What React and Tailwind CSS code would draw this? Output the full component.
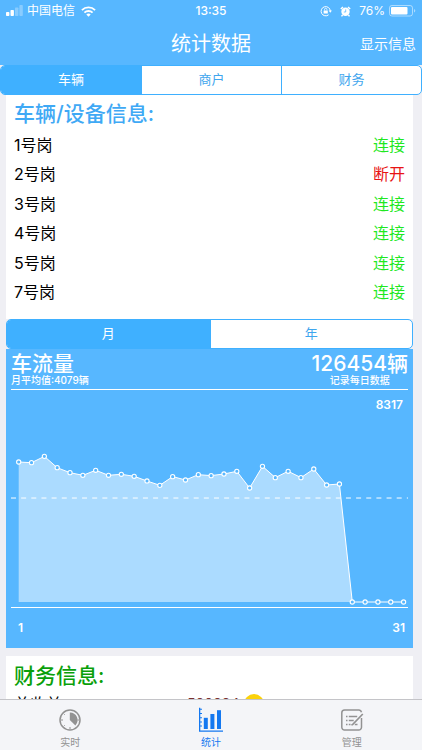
import React, { useState } from 'react';

const SECTIONS = ['车辆', '商户', '财务'];
const PERIODS = ['月', '年'];

const DEVICES = [
    { name: '1号岗', online: true },
    { name: '2号岗', online: false },
    { name: '3号岗', online: true },
    { name: '4号岗', online: true },
    { name: '5号岗', online: true },
    { name: '7号岗', online: true }
];

const DAILY = [
    5492, 5466, 5714, 5270, 5074, 4970, 5166, 4970, 5009, 4931, 4748, 4577, 4918, 4787, 4996, 4957,
    5022, 5127, 4473, 5323, 4879, 5127, 4879, 5218, 4591, 4630, 0, 0, 0, 0, 0
];
const AVERAGE = 4079;
const MAX = 8317;

function SignalIcon() {
    return (
        <svg width="17" height="12" viewBox="0 0 17 12" fill="white" aria-hidden="true">
            <rect x="0" y="7" width="3.4" height="4" rx="0.8" />
            <rect x="4.5" y="5" width="3.4" height="6" rx="0.8" />
            <rect x="9" y="2.5" width="3.4" height="8.5" rx="0.8" opacity="0.3" />
            <rect x="13.4" y="0" width="3.4" height="11" rx="0.8" opacity="0.3" />
        </svg>
    );
}

function WifiIcon() {
    return (
        <svg width="15" height="11" viewBox="0 0 15 11" fill="none" stroke="white" strokeWidth="1.8" aria-hidden="true">
            <path d="M0.9 4.1a9.4 9.4 0 0 1 13.2 0" />
            <path d="M3.4 6.7a5.8 5.8 0 0 1 8.2 0" />
            <path d="M7.5 10.8 5.3 8.6a3.1 3.1 0 0 1 4.4 0z" fill="white" stroke="none" />
        </svg>
    );
}

function RotationLockIcon() {
    return (
        <svg width="12" height="12" viewBox="0 0 12 12" fill="none" stroke="white" strokeWidth="1" aria-hidden="true">
            <path d="M8.6 9.8A4.6 4.6 0 1 1 10.3 6" />
            <path d="M8.6 5.6h3.3l-1.6 2.2z" fill="white" stroke="none" />
            <rect x="3.6" y="5.4" width="4.2" height="3.2" rx="0.4" fill="white" stroke="none" />
            <path d="M4.5 5.4V4.5a1.2 1.2 0 0 1 2.4 0v0.9" strokeWidth="0.8" />
        </svg>
    );
}

function AlarmIcon() {
    return (
        <svg width="11" height="11" viewBox="0 0 11 11" aria-hidden="true">
            <path d="M0.8 3 3 0.9M10.2 3 8 0.9M2.6 9 1.5 10.4M8.4 9l1.1 1.4" stroke="white" strokeWidth="1.4" />
            <circle cx="5.5" cy="5.8" r="4.2" fill="white" />
            <path d="M5.7 3.4v2.6H3.8" fill="none" stroke="#57b7ff" strokeWidth="0.8" />
        </svg>
    );
}

function BatteryIcon() {
    return (
        <svg width="27" height="12" viewBox="0 0 27 12" aria-hidden="true">
            <rect x="0.5" y="0.5" width="23" height="10.5" rx="2.4" fill="none" stroke="white" opacity="0.5" />
            <rect x="2" y="2" width="16.5" height="7.5" rx="1" fill="white" />
            <path d="M25 4v3.6q1.3-.5 1.3-1.8T25 4z" fill="white" opacity="0.5" />
        </svg>
    );
}

function ClockIcon() {
    return (
        <svg width="24" height="24" viewBox="0 0 24 24" fill="none" stroke="currentColor" aria-hidden="true">
            <circle cx="12" cy="12" r="10" strokeWidth="1.5" />
            <path d="M11.8 4.5V12l5.6 5.4A7.6 7.6 0 0 0 11.8 4.5z" fill="currentColor" stroke="none" />
            <path d="M3 12h2M12 21v-2M19.4 12H21M5.7 5.7l1 1M5.7 18.3l1-1" strokeWidth="1" />
        </svg>
    );
}

function BarsIcon() {
    return (
        <svg width="26" height="26" viewBox="0 0 26 26" fill="currentColor" aria-hidden="true">
            <path d="M1 0.8h1.3v22.6H25v1.4H1z" />
            <path d="M2 1.8h2v1H2zM2 6h2v1H2zM2 10.2h2v1H2zM2 14.4h2v1H2zM2 18.6h2v1H2z" />
            <rect x="5.8" y="10.8" width="4" height="11.2" />
            <rect x="12.4" y="7" width="4" height="15" />
            <rect x="19" y="3.2" width="4" height="18.8" />
        </svg>
    );
}

function FormIcon() {
    return (
        <svg width="24" height="24" viewBox="0 0 24 24" fill="none" stroke="currentColor" strokeWidth="1.5" aria-hidden="true">
            <path d="M21.5 4.2A3 3 0 0 0 19 2H4.6a2.8 2.8 0 0 0-2.8 2.8v14.4A2.8 2.8 0 0 0 4.6 22h14.1a2.8 2.8 0 0 0 2.8-2.8V10" />
            <path d="M22.8 6 12.6 16.6l-1.2.4" strokeWidth="1.7" />
            <path d="M6 8.5h1.5M8.8 8.5h8.4M6 12.5h1.5M8.8 12.5h4.9M6 16.5h1.5M8.8 16.5h1.7M14.8 16.5h2.7" strokeWidth="1.3" />
        </svg>
    );
}

function Segmented({ items, active, onChange, cols }) {
    return (
        <div className={`grid ${cols} overflow-hidden rounded-[5px] border border-[#3fb0ff] bg-white`}>
            {items.map((item, i) => (
                <button
                    key={item}
                    type="button"
                    aria-pressed={active === i}
                    onClick={() => onChange(i)}
                    className={`h-7 text-[13px] ${i > 0 ? 'border-l border-[#3fb0ff]' : ''} ${active === i ? 'bg-[#3fb0ff] text-white' : 'text-[#3fa6ee]'}`}
                >
                    {item}
                </button>
            ))}
        </div>
    );
}

function TrafficChart() {
    const baseline = 184;
    const toY = (value) => baseline - (value / MAX) * 212;
    const points = DAILY.map((value, i) => [12.7 + i * 12.83, toY(value)]);
    const line = points.map(([x, y]) => `${x.toFixed(1)},${y.toFixed(1)}`).join(' ');

    return (
        <svg viewBox="0 0 407 190" className="block w-full" role="img" aria-label="车流量">
            <polygon points={`12.7,${baseline} ${line} 397.6,${baseline}`} fill="white" fillOpacity="0.5" />
            <path d={`M5 ${toY(AVERAGE)}H402`} stroke="white" strokeWidth="1" strokeDasharray="5 5.15" />
            <polyline points={line} fill="none" stroke="white" strokeWidth="1" />
            {points.map(([x, y]) => (
                <circle key={x} cx={x} cy={y} r="2.1" fill="#57b7ff" stroke="white" strokeWidth="1.1" />
            ))}
            <path d="M5 189.5H402" stroke="white" strokeWidth="1" />
        </svg>
    );
}

function TabItem({ icon, label, active }) {
    return (
        <a
            href="#"
            aria-current={active ? 'page' : undefined}
            className={`flex flex-col items-center pt-1 text-[10px] leading-3 ${active ? 'text-[#1478f0]' : 'text-[#929292]'}`}
        >
            <span className="flex h-8 items-center">{icon}</span>
            {label}
        </a>
    );
}

export default function App() {
    const [section, setSection] = useState(0);
    const [period, setPeriod] = useState(0);

    return (
        <div className="flex h-screen flex-col overflow-hidden bg-[#efeff4] font-[Inter,'Noto_Sans_CJK_SC',sans-serif] text-black">
            <header className="shrink-0 bg-[#57b7ff] text-white">
                <div className="grid h-[22px] grid-cols-[1fr_auto_1fr] items-center px-1.5 text-xs">
                    <div className="flex items-center gap-1">
                        <SignalIcon />
                        <span>中国电信</span>
                        <span className="pl-0.5"><WifiIcon /></span>
                    </div>
                    <span className="font-medium">13:35</span>
                    <div className="flex items-center justify-end gap-1">
                        <RotationLockIcon />
                        <span className="px-1"><AlarmIcon /></span>
                        <span>76%</span>
                        <BatteryIcon />
                    </div>
                </div>
                <div className="grid h-[43px] grid-cols-[1fr_auto_1fr] items-center px-1.5">
                    <h1 className="col-start-2 text-xl">统计数据</h1>
                    <button type="button" className="justify-self-end text-sm">显示信息</button>
                </div>
            </header>

            <Segmented items={SECTIONS} active={section} onChange={setSection} cols="grid-cols-3" />

            <main className="min-h-0 flex-1 overflow-hidden pr-[9px] pl-1.5">
                <section className="bg-white px-2 pt-[5px] pb-3">
                    <h2 className="text-[21px] leading-7 font-medium text-[#3fa9f5]">车辆/设备信息:</h2>
                    <table className="mt-0.5 h-[177px] w-full text-base leading-6">
                        <tbody>
                            {DEVICES.map((device) => (
                                <tr key={device.name}>
                                    <th scope="row" className="text-left font-normal">{device.name}</th>
                                    <td className={`text-right ${device.online ? 'text-[#1fe81f]' : 'text-[#e81414]'}`}>
                                        {device.online ? '连接' : '断开'}
                                    </td>
                                </tr>
                            ))}
                        </tbody>
                    </table>
                </section>

                <Segmented items={PERIODS} active={period} onChange={setPeriod} cols="grid-cols-2" />

                <section className="bg-[#57b7ff] pb-2 font-medium text-white">
                    <div className="mx-[5px] flex justify-between border-b border-white pt-1 pb-1">
                        <div>
                            <h2 className="text-[21px] leading-[22px]">车流量</h2>
                            <p className="text-[10px] leading-[10px]">月平均值:4079辆</p>
                        </div>
                        <div className="text-center">
                            <p className="text-[21px] leading-[22px]">126454辆</p>
                            <p className="text-[10px] leading-[10px]">记录每日数据</p>
                        </div>
                    </div>
                    <p className="px-2.5 pt-1.5 pb-1 text-right text-xs leading-[18px] font-semibold">8317</p>
                    <TrafficChart />
                    <div className="flex justify-between px-2 pt-3 pb-1 text-xs leading-4 font-semibold">
                        <span className="pl-1">1</span>
                        <span>31</span>
                    </div>
                </section>

                <section className="mt-2 bg-white px-2 pt-1">
                    <h2 className="text-[21px] leading-8 font-medium text-[#0a9f0a]">财务信息:</h2>
                    <div className="grid grid-cols-[169px_auto_1fr] items-center gap-1 leading-6">
                        <span>总收益</span>
                        <span className="text-sm text-[#7a3030]">500994</span>
                        <span className="size-5 rounded-full bg-[#fbd20b]" />
                    </div>
                </section>
            </main>

            <nav className="grid h-[51px] shrink-0 grid-cols-3 border-t border-[#c4c4c8] bg-[#f4f5f8]">
                <TabItem icon={<ClockIcon />} label="实时" />
                <TabItem icon={<BarsIcon />} label="统计" active />
                <TabItem icon={<FormIcon />} label="管理" />
            </nav>
        </div>
    );
}
